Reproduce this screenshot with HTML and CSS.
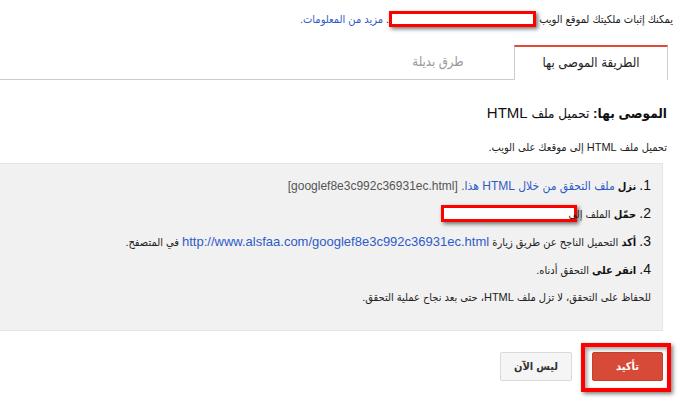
FILE: index.html
```html
<!DOCTYPE html>
<html lang="ar" dir="rtl">
<head>
<meta charset="utf-8">
<link rel="stylesheet" href="styles.css">
</head>
<body>
<div class="page">
  <p class="intro">يمكنك إثبات ملكيتك لموقع الويب <span class="redact redact-top"></span>. <a class="link" href="#">مزيد من المعلومات.</a></p>

  <div class="tabs">
    <div class="tab tab-active">الطريقة الموصى بها</div>
    <div class="tab tab-inactive">طرق بديلة</div>
    <div class="tab-fill"></div>
  </div>

  <div class="content">
    <h2 class="title"><b>الموصى بها:</b> تحميل ملف <span class="latin">HTML</span></h2>
    <p class="desc">تحميل ملف HTML إلى موقعك على الويب.</p>
  </div>

  <div class="steps">
    <div class="step"><span class="num">1.</span> <b>نزل</b> <a class="link" href="#">ملف التحقق من خلال HTML هذا</a><span class="muted">. [googlef8e3c992c36931ec.html]</span></div>
    <div class="step"><span class="num">2.</span> <b>حمّل</b> الملف إلى <span class="redact redact-step"></span></div>
    <div class="step"><span class="num">3.</span> <b>أكد</b> التحميل الناجح عن طريق زيارة <a class="link url" href="#">http://www.alsfaa.com/googlef8e3c992c36931ec.html</a> في المتصفح.</div>
    <div class="step"><span class="num">4.</span> <b>انقر على</b> التحقق أدناه.</div>
    <div class="note">للحفاظ على التحقق، لا تزل ملف HTML، حتى بعد نجاح عملية التحقق.</div>
  </div>

  <div class="actions">
    <button class="btn btn-primary">تأكيد</button>
    <button class="btn btn-secondary">ليس الآن</button>
  </div>
</div>
</body>
</html>
```

FILE: styles.css
```css
html, body {
  margin: 0;
  padding: 0;
  background: #ffffff;
}

body {
  direction: rtl;
  font-family: "Liberation Sans", "DejaVu Sans Condensed", "DejaVu Sans", Arial, sans-serif;
  color: #222222;
  overflow: hidden;
}

.page {
  width: 684px;
  height: 398px;
  display: flex;
  flex-direction: column;
}

.link {
  color: #2f5bc7;
  text-decoration: none;
}

.intro {
  margin: 0;
  padding: 11px 11px 0 0;
  font-size: 11px;
  line-height: 16px;
  height: 16px;
  color: #222;
}

.redact {
  display: inline-block;
  box-sizing: border-box;
  background: #ffffff;
  border: 3px solid #ff0000;
  box-shadow: 2px 2px 4px rgba(0, 0, 0, 0.55);
  vertical-align: middle;
}

.redact-top {
  width: 147px;
  height: 16px;
  margin: -2px 0 0 0;
}

.redact-step {
  width: 136px;
  height: 17px;
  margin-top: -3px;
  margin-right: -12px;
}

.tabs {
  display: flex;
  margin-top: 18px;
  height: 35px;
}

.tab {
  box-sizing: border-box;
  height: 35px;
  text-align: center;
  font-size: 13px;
  line-height: 32px;
}

.tab-active {
  width: 154px;
  margin-right: 16px;
  border: 1px solid #cccccc;
  border-top: 2px solid #dd4b39;
  border-bottom: none;
  color: #222;
}

.tab-inactive {
  width: 152px;
  border-bottom: 1px solid #cccccc;
  color: #999999;
  line-height: 34px;
}

.tab-fill {
  flex: 1;
  border-bottom: 1px solid #cccccc;
}

.content {
  padding-right: 17px;
}

.title {
  margin: 23px 0 0 0;
  font-size: 13.5px;
  line-height: 20px;
  font-weight: normal;
  color: #111;
}

.title .latin {
  font-size: 15px;
}

.title b {
  font-weight: bold;
}

.desc {
  margin: 15px 0 0 0;
  font-size: 11px;
  line-height: 16px;
  color: #222;
}

.steps {
  box-sizing: border-box;
  margin: 8px 21px 0 -1px;
  height: 168px;
  border: 1px solid #e5e5e5;
  background: #f1f1f1;
  padding: 12px 11px 0 0;
  font-size: 11px;
  color: #222;
}

.step {
  line-height: 18px;
  height: 18px;
  margin-bottom: 10px;
  white-space: nowrap;
}

.step b {
  font-weight: bold;
  color: #111;
}

.num {
  font-size: 14px;
  font-weight: normal;
  color: #111;
}

.muted {
  color: #555555;
  font-size: 12px;
}

.step .link {
  font-size: 12px;
}

.step .url {
  font-size: 13px;
}

.note {
  line-height: 18px;
  font-size: 11px;
  padding-right: 0;
  white-space: nowrap;
}

.actions {
  display: flex;
  gap: 20px;
  margin: 21px 21px 0 0;
}

.btn {
  box-sizing: border-box;
  height: 29px;
  border-radius: 2px;
  font-family: "Liberation Sans", "DejaVu Sans Condensed", "DejaVu Sans", Arial, sans-serif;
  font-size: 11px;
  font-weight: bold;
  padding: 0;
  cursor: pointer;
}

.btn-primary {
  position: relative;
  width: 71px;
  background: #d84a38;
  border: 1px solid #c6402f;
  color: #ffffff;
}

.btn-primary::after {
  content: "";
  position: absolute;
  top: -10px;
  bottom: -12px;
  right: -9px;
  left: -12px;
  border: 4px solid #ff0000;
  box-shadow: 2px 2px 4px rgba(0, 0, 0, 0.5), inset 2px 2px 4px rgba(0, 0, 0, 0.4);
}

.btn-secondary {
  width: 72px;
  background: #f5f5f5;
  border: 1px solid #d9d9d9;
  color: #333333;
}
```
